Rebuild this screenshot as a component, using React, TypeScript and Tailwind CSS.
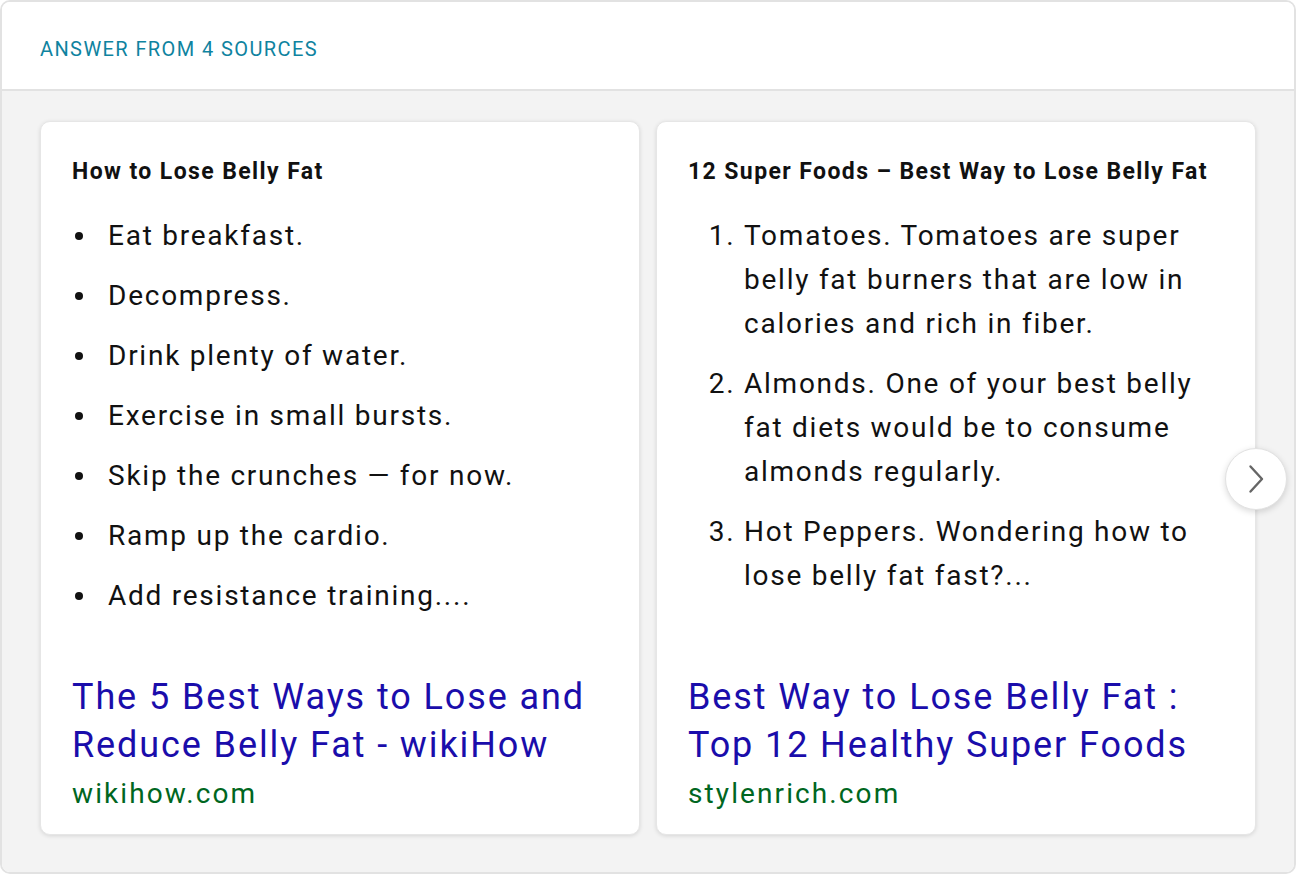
import React from 'react';

const cards = [
  {
    title: 'How to Lose Belly Fat',
    ordered: false,
    items: [
      'Eat breakfast.',
      'Decompress.',
      'Drink plenty of water.',
      'Exercise in small bursts.',
      'Skip the crunches — for now.',
      'Ramp up the cardio.',
      'Add resistance training....',
    ],
    link: ['The 5 Best Ways to Lose and', 'Reduce Belly Fat - wikiHow'],
    domain: 'wikihow.com',
  },
  {
    title: '12 Super Foods – Best Way to Lose Belly Fat',
    ordered: true,
    items: [
      'Tomatoes. Tomatoes are super belly fat burners that are low in calories and rich in fiber.',
      'Almonds. One of your best belly fat diets would be to consume almonds regularly.',
      'Hot Peppers. Wondering how to lose belly fat fast?...',
    ],
    link: ['Best Way to Lose Belly Fat :', 'Top 12 Healthy Super Foods'],
    domain: 'stylenrich.com',
  },
];

export default function App() {
  return (
    <div className="w-[1296px] h-[874px] bg-white font-['Roboto',sans-serif]">
      <div className="h-full flex flex-col border-2 border-[#e2e2e2] rounded-[10px] overflow-hidden">
        {/* Header */}
        <div className="h-[89px] shrink-0 flex items-center pl-[38px] pt-[6px] border-b-2 border-[#e2e2e2] bg-white">
          <span className="text-[20px] tracking-[1.4px] text-[#0f83a0]">ANSWER FROM 4 SOURCES</span>
        </div>

        {/* Cards */}
        <div className="relative flex-1 bg-[#f3f3f3] flex gap-[16px] pl-[38px] pt-[30px] pb-[37px]">
          {cards.map((c) => (
            <div
              key={c.title}
              className="w-[600px] flex flex-col bg-white rounded-[10px] border border-[#e6e6e6] shadow-[0_1px_4px_rgba(0,0,0,0.12)] pl-[31px] pr-[24px] pt-[36px] pb-[22px]"
            >
              <div className="text-[23px] leading-[28px] font-bold tracking-[1.4px] text-[#111] whitespace-nowrap">
                {c.title}
              </div>
              {c.ordered ? (
                <ol className="list-decimal list-outside pl-[56px] mt-[28px] text-[28px] leading-[44px] tracking-[1.75px] text-[#111] space-y-[16px] pr-[16px]">
                  {c.items.map((it) => (
                    <li key={it} className="pl-0">{it}</li>
                  ))}
                </ol>
              ) : (
                <ul className="mt-[28px] text-[28px] leading-[44px] tracking-[1.75px] text-[#111] space-y-[16px]">
                  {c.items.map((it) => (
                    <li key={it} className="flex">
                      <span className="w-[36px] shrink-0 flex items-center">
                        <span className="ml-[3px] w-[8px] h-[8px] rounded-full bg-[#111]" />
                      </span>
                      <span>{it}</span>
                    </li>
                  ))}
                </ul>
              )}
              <div className="mt-auto">
                <div className="text-[36px] leading-[48px] tracking-[1.9px] text-[#1a0dab]">
                  {c.link.map((l) => (
                    <div key={l}>{l}</div>
                  ))}
                </div>
                <div className="mt-[7px] text-[28px] leading-[36px] tracking-[2.1px] text-[#006621]">{c.domain}</div>
              </div>
            </div>
          ))}

          {/* Next button */}
          <button className="absolute left-[1223px] top-[357px] w-[62px] h-[62px] rounded-full bg-white border border-[#e2e2e2] shadow-[0_2px_6px_rgba(0,0,0,0.15)] flex items-center justify-center">
            <svg width="18" height="30" viewBox="0 0 18 30" fill="none">
              <path d="M3.5 2.5 L15 15 L3.5 27.5" stroke="#666" strokeWidth="2.4" strokeLinecap="round" strokeLinejoin="round" />
            </svg>
          </button>
        </div>
      </div>
    </div>
  );
}
